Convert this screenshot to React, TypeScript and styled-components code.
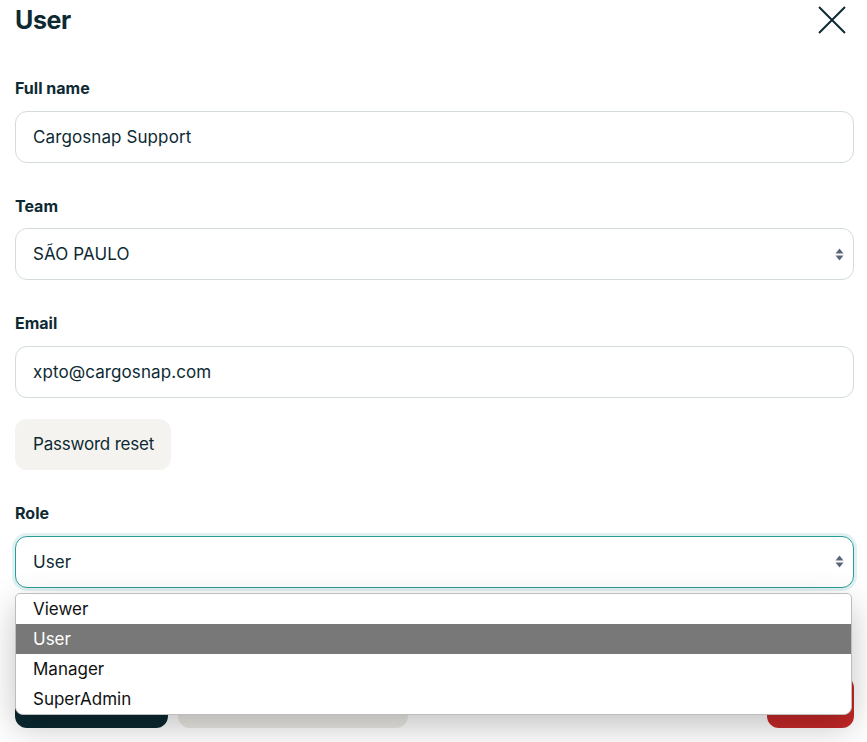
import * as React from "react";
import styled, { createGlobalStyle } from "styled-components";

const GlobalStyle = createGlobalStyle`
  html, body {
    margin: 0;
    padding: 0;
    background: #ffffff;
  }
  body {
    font-family: Inter, "Noto Sans", sans-serif;
    color: #0d2a33;
  }
  * {
    box-sizing: border-box;
  }
`;

const Page = styled.div`
  padding: 4px 13px 0 15px;
  height: 742px;
  overflow: hidden;
`;

const Header = styled.div`
  display: flex;
  align-items: center;
  justify-content: space-between;
  height: 32px;
  margin-bottom: 40px;
`;

const Title = styled.h1`
  margin: 0;
  font-size: 25px;
  line-height: 32px;
  font-weight: 700;
  letter-spacing: -0.4px;
`;

const CloseButton = styled.button`
  border: 0;
  background: none;
  padding: 0;
  margin-right: 8px;
  width: 28px;
  height: 28px;
  display: flex;
  cursor: pointer;
`;

const Field = styled.div<{ $gap?: number }>`
  position: relative;
  margin-bottom: ${(p) => p.$gap ?? 31}px;
`;

const Label = styled.label`
  display: block;
  font-size: 16px;
  line-height: 24px;
  font-weight: 700;
  margin-bottom: 10.5px;
`;

const Input = styled.div<{ $focused?: boolean }>`
  display: flex;
  align-items: center;
  justify-content: space-between;
  height: 52px;
  padding: 0 9px 0 17px;
  border: 1px solid ${(p) => (p.$focused ? "#2a9d9a" : "#d3dbdb")};
  border-radius: 12px;
  font-size: 17px;
  letter-spacing: 0.1px;
  background: #fff;
  box-shadow: ${(p) => (p.$focused ? "0 0 0 3px rgba(42, 157, 154, 0.14)" : "none")};
`;

const SecondaryButton = styled.button`
  display: block;
  height: 51px;
  padding: 0 17px 0 18px;
  border: 0;
  border-radius: 12px;
  background: #f5f3ef;
  color: #0d2a33;
  font-family: inherit;
  font-size: 17px;
  letter-spacing: -0.2px;
  margin-bottom: 31.5px;
`;

const Dropdown = styled.ul`
  position: absolute;
  left: 0;
  right: 2px;
  top: calc(100% + 5.5px);
  margin: 0;
  padding: 0;
  list-style: none;
  background: #fff;
  border: 1px solid #bdbdbd;
  border-radius: 5px 5px 8px 8px;
  box-shadow: 0 12px 34px rgba(0, 0, 0, 0.24);
  overflow: hidden;
  z-index: 2;
`;

const Option = styled.li<{ $selected?: boolean }>`
  height: 30px;
  line-height: 30px;
  padding-left: 17px;
  font-size: 17px;
  color: ${(p) => (p.$selected ? "#ffffff" : "#111111")};
  background: ${(p) => (p.$selected ? "#787878" : "transparent")};
`;

const Footer = styled.div`
  display: flex;
  gap: 10px;
  margin-top: 88.5px;
`;

const FooterButton = styled.button<{ $tone: "dark" | "light" | "danger"; $width: number }>`
  height: 52px;
  width: ${(p) => p.$width}px;
  border: 0;
  border-radius: 12px;
  background: ${(p) =>
    p.$tone === "dark" ? "#0b2831" : p.$tone === "danger" ? "#c62828" : "#ecebe6"};
  margin-left: ${(p) => (p.$tone === "danger" ? "auto" : "0")};
`;

const SelectArrows = () => (
  <svg width="9" height="13" viewBox="0 0 9 13" aria-hidden>
    <path d="M4.5 0.5 L8.5 5.5 H0.5 Z" fill="#5b6579" />
    <path d="M4.5 12.5 L8.5 7.5 H0.5 Z" fill="#5b6579" />
  </svg>
);

const roles = ["Viewer", "User", "Manager", "SuperAdmin"];

const App: React.FC = () => {
  const role = "User";
  return (
    <>
      <GlobalStyle />
      <Page>
        <Header>
          <Title>User</Title>
          <CloseButton aria-label="Close">
            <svg width="28" height="28" viewBox="0 0 28 28">
              <path d="M1 1 L27 27 M27 1 L1 27" stroke="#0d2a33" strokeWidth="2" fill="none" />
            </svg>
          </CloseButton>
        </Header>

        <Field>
          <Label>Full name</Label>
          <Input>Cargosnap Support</Input>
        </Field>

        <Field>
          <Label>Team</Label>
          <Input>
            SÃO PAULO
            <SelectArrows />
          </Input>
        </Field>

        <Field $gap={21}>
          <Label>Email</Label>
          <Input>xpto@cargosnap.com</Input>
        </Field>

        <SecondaryButton>Password reset</SecondaryButton>

        <Field $gap={0}>
          <Label>Role</Label>
          <Input $focused>
            {role}
            <SelectArrows />
          </Input>
          <Dropdown>
            {roles.map((r) => (
              <Option key={r} $selected={r === role}>
                {r}
              </Option>
            ))}
          </Dropdown>
        </Field>

        <Footer>
          <FooterButton $tone="dark" $width={153} aria-label="Save" />
          <FooterButton $tone="light" $width={230} aria-label="Cancel" />
          <FooterButton $tone="danger" $width={87} aria-label="Delete" />
        </Footer>
      </Page>
    </>
  );
};

export default App;
